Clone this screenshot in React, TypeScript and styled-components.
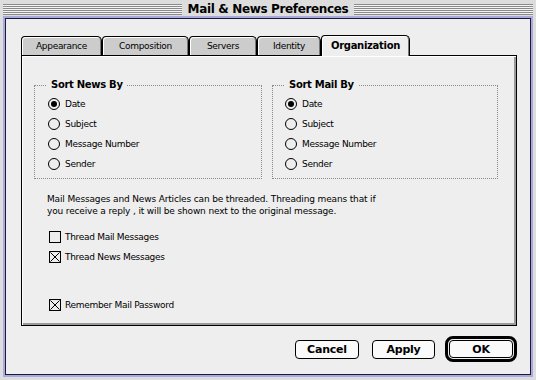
import React from 'react';
import styled, { createGlobalStyle } from 'styled-components';

const sysFont = `"DejaVu Sans", Verdana, sans-serif`;

const GlobalStyle = createGlobalStyle`
  html, body {
    margin: 0;
    padding: 0;
    background: #dddddd;
  }
  * {
    box-sizing: border-box;
  }
`;

const Window = styled.div`
  width: 536px;
  height: 380px;
  display: flex;
  flex-direction: column;
  padding: 0 5px 5px 5px;
  background: #dddddd;
  font-family: ${sysFont};
  color: #000;
`;

const TitleBar = styled.div`
  height: 18px;
  display: flex;
  align-items: center;
  gap: 6px;
  margin: 0 -2px;
`;

const Stripes = styled.div`
  flex: 1;
  height: 11px;
  background: repeating-linear-gradient(
    to bottom,
    #8a8a8a 0 1px,
    #f4f4f4 1px 2px
  );
`;

const Title = styled.div`
  font-weight: bold;
  font-size: 12px;
  letter-spacing: -0.35px;
  white-space: nowrap;
  line-height: 14px;
`;

const Content = styled.div`
  flex: 1;
  display: flex;
  flex-direction: column;
  background: #eeeeee;
  border: 1px solid #1a1a3a;
  box-shadow: 0 0 0 2px #a9a9dc;
  padding: 16px 13px 0 15px;
`;

const TabRow = styled.div`
  display: flex;
  align-items: flex-end;
  height: 20px;
  position: relative;
  z-index: 1;
`;

const Tab = styled.div<{ $w: number; $active?: boolean }>`
  width: ${(p) => p.$w}px;
  height: ${(p) => (p.$active ? 21 : 19)}px;
  margin-bottom: ${(p) => (p.$active ? -1 : 0)}px;
  display: flex;
  align-items: center;
  justify-content: center;
  padding-bottom: ${(p) => (p.$active ? 2 : 1)}px;
  border: 1px solid #000;
  border-bottom: none;
  border-radius: 4px 5px 0 0;
  background: ${(p) => (p.$active ? '#eeeeee' : '#cccccc')};
  box-shadow: inset 1px 1px 0 #ffffff, inset -1px 0 0 #777777;
  font-size: ${(p) => (p.$active ? 10 : 9)}px;
  font-weight: ${(p) => (p.$active ? 'bold' : 'normal')};
  letter-spacing: -0.3px;
  white-space: nowrap;
`;

const Panel = styled.div`
  height: 271px;
  display: flex;
  flex-direction: column;
  border: 1px solid #000;
  background: #eeeeee;
  box-shadow: inset 1px 1px 0 #ffffff, inset -2px -2px 0 #9a9a9a;
  padding: 29px 0 0 12px;
`;

const GroupRow = styled.div`
  display: flex;
  gap: 10px;
`;

const GroupBox = styled.div<{ $w: number }>`
  position: relative;
  width: ${(p) => p.$w}px;
  height: 94px;
  border: 1px dotted #8a8a8a;
  padding: 8px 0 0 ${(p) => (p.$w > 227 ? 13 : 12)}px;
`;

const Legend = styled.span`
  position: absolute;
  top: -8px;
  left: 12px;
  padding: 0 4px;
  background: #eeeeee;
  font-size: 10px;
  font-weight: bold;
  letter-spacing: -0.3px;
  line-height: 14px;
  white-space: nowrap;
`;

const OptionRow = styled.label`
  height: 20px;
  display: flex;
  align-items: center;
  gap: 5px;
  font-size: 9px;
  letter-spacing: -0.3px;
  white-space: nowrap;
`;

const Radio = styled.span<{ $on?: boolean }>`
  width: 12px;
  height: 12px;
  border: 1px solid #000;
  border-radius: 50%;
  background: #eeeeee;
  display: flex;
  align-items: center;
  justify-content: center;

  &::after {
    content: '';
    display: ${(p) => (p.$on ? 'block' : 'none')};
    width: 6px;
    height: 6px;
    border-radius: 50%;
    background: #000;
  }
`;

const Description = styled.p`
  margin: 14px 0 0 13px;
  font-size: 9px;
  letter-spacing: -0.15px;
  line-height: 12px;
  white-space: nowrap;
`;

const CheckList = styled.div<{ $top: number }>`
  margin: ${(p) => p.$top}px 0 0 15px;
  display: flex;
  flex-direction: column;

  ${OptionRow} {
    gap: 4px;
  }
`;

const Box = styled.span`
  width: 12px;
  height: 12px;
  border: 1px solid #000;
  background: #eeeeee;
  display: block;

  svg {
    display: block;
  }
`;

const ButtonRow = styled.div`
  display: flex;
  justify-content: flex-end;
  align-items: center;
  margin-top: 10px;
  height: 26px;
  gap: 13px;
`;

const Button = styled.button<{ $w: number }>`
  width: ${(p) => p.$w}px;
  height: 19px;
  padding: 0;
  border: 1px solid #000;
  border-radius: 4px;
  background: #fafafa;
  font-family: ${sysFont};
  font-size: 11px;
  font-weight: bold;
  letter-spacing: -0.2px;
  color: #000;
`;

const DefaultRing = styled.div`
  margin-left: -3px;
  border: 3px solid #000;
  border-radius: 8px;
  padding: 1px;
  display: flex;

  ${Button} {
    height: 18px;
  }
`;

const Check = ({ on }: { on?: boolean }) => (
  <Box>
    {on && (
      <svg width="10" height="10" viewBox="0 0 10 10">
        <path d="M0.5 0.5 L9.5 9.5 M9.5 0.5 L0.5 9.5" stroke="#000" strokeWidth="1" />
      </svg>
    )}
  </Box>
);

const tabs = [
  { name: 'Appearance', w: 81 },
  { name: 'Composition', w: 87 },
  { name: 'Servers', w: 68 },
  { name: 'Identity', w: 64 },
  { name: 'Organization', w: 89, active: true },
];

const sortOptions = ['Date', 'Subject', 'Message Number', 'Sender'];

const SortGroup = ({ title, w }: { title: string; w: number }) => (
  <GroupBox $w={w}>
    <Legend>{title}</Legend>
    {sortOptions.map((o, i) => (
      <OptionRow key={o}>
        <Radio $on={i === 0} />
        {o}
      </OptionRow>
    ))}
  </GroupBox>
);

const App = () => {
  return (
    <>
      <GlobalStyle />
      <Window>
        <TitleBar>
          <Stripes />
          <Title>Mail &amp; News Preferences</Title>
          <Stripes />
        </TitleBar>
        <Content>
          <TabRow>
            {tabs.map((t) => (
              <Tab key={t.name} $w={t.w} $active={t.active}>
                {t.name}
              </Tab>
            ))}
          </TabRow>
          <Panel>
            <GroupRow>
              <SortGroup title="Sort News By" w={228} />
              <SortGroup title="Sort Mail By" w={226} />
            </GroupRow>
            <Description>
              Mail Messages and News Articles can be threaded. Threading means that if
              <br />
              you receive a reply , it will be shown next to the original message.
            </Description>
            <CheckList $top={10}>
              <OptionRow>
                <Check />
                Thread Mail Messages
              </OptionRow>
              <OptionRow>
                <Check on />
                Thread News Messages
              </OptionRow>
            </CheckList>
            <CheckList $top={28}>
              <OptionRow>
                <Check on />
                Remember Mail Password
              </OptionRow>
            </CheckList>
          </Panel>
          <ButtonRow>
            <Button $w={64}>Cancel</Button>
            <Button $w={63}>Apply</Button>
            <DefaultRing>
              <Button $w={64}>OK</Button>
            </DefaultRing>
          </ButtonRow>
        </Content>
      </Window>
    </>
  );
};

export default App;
